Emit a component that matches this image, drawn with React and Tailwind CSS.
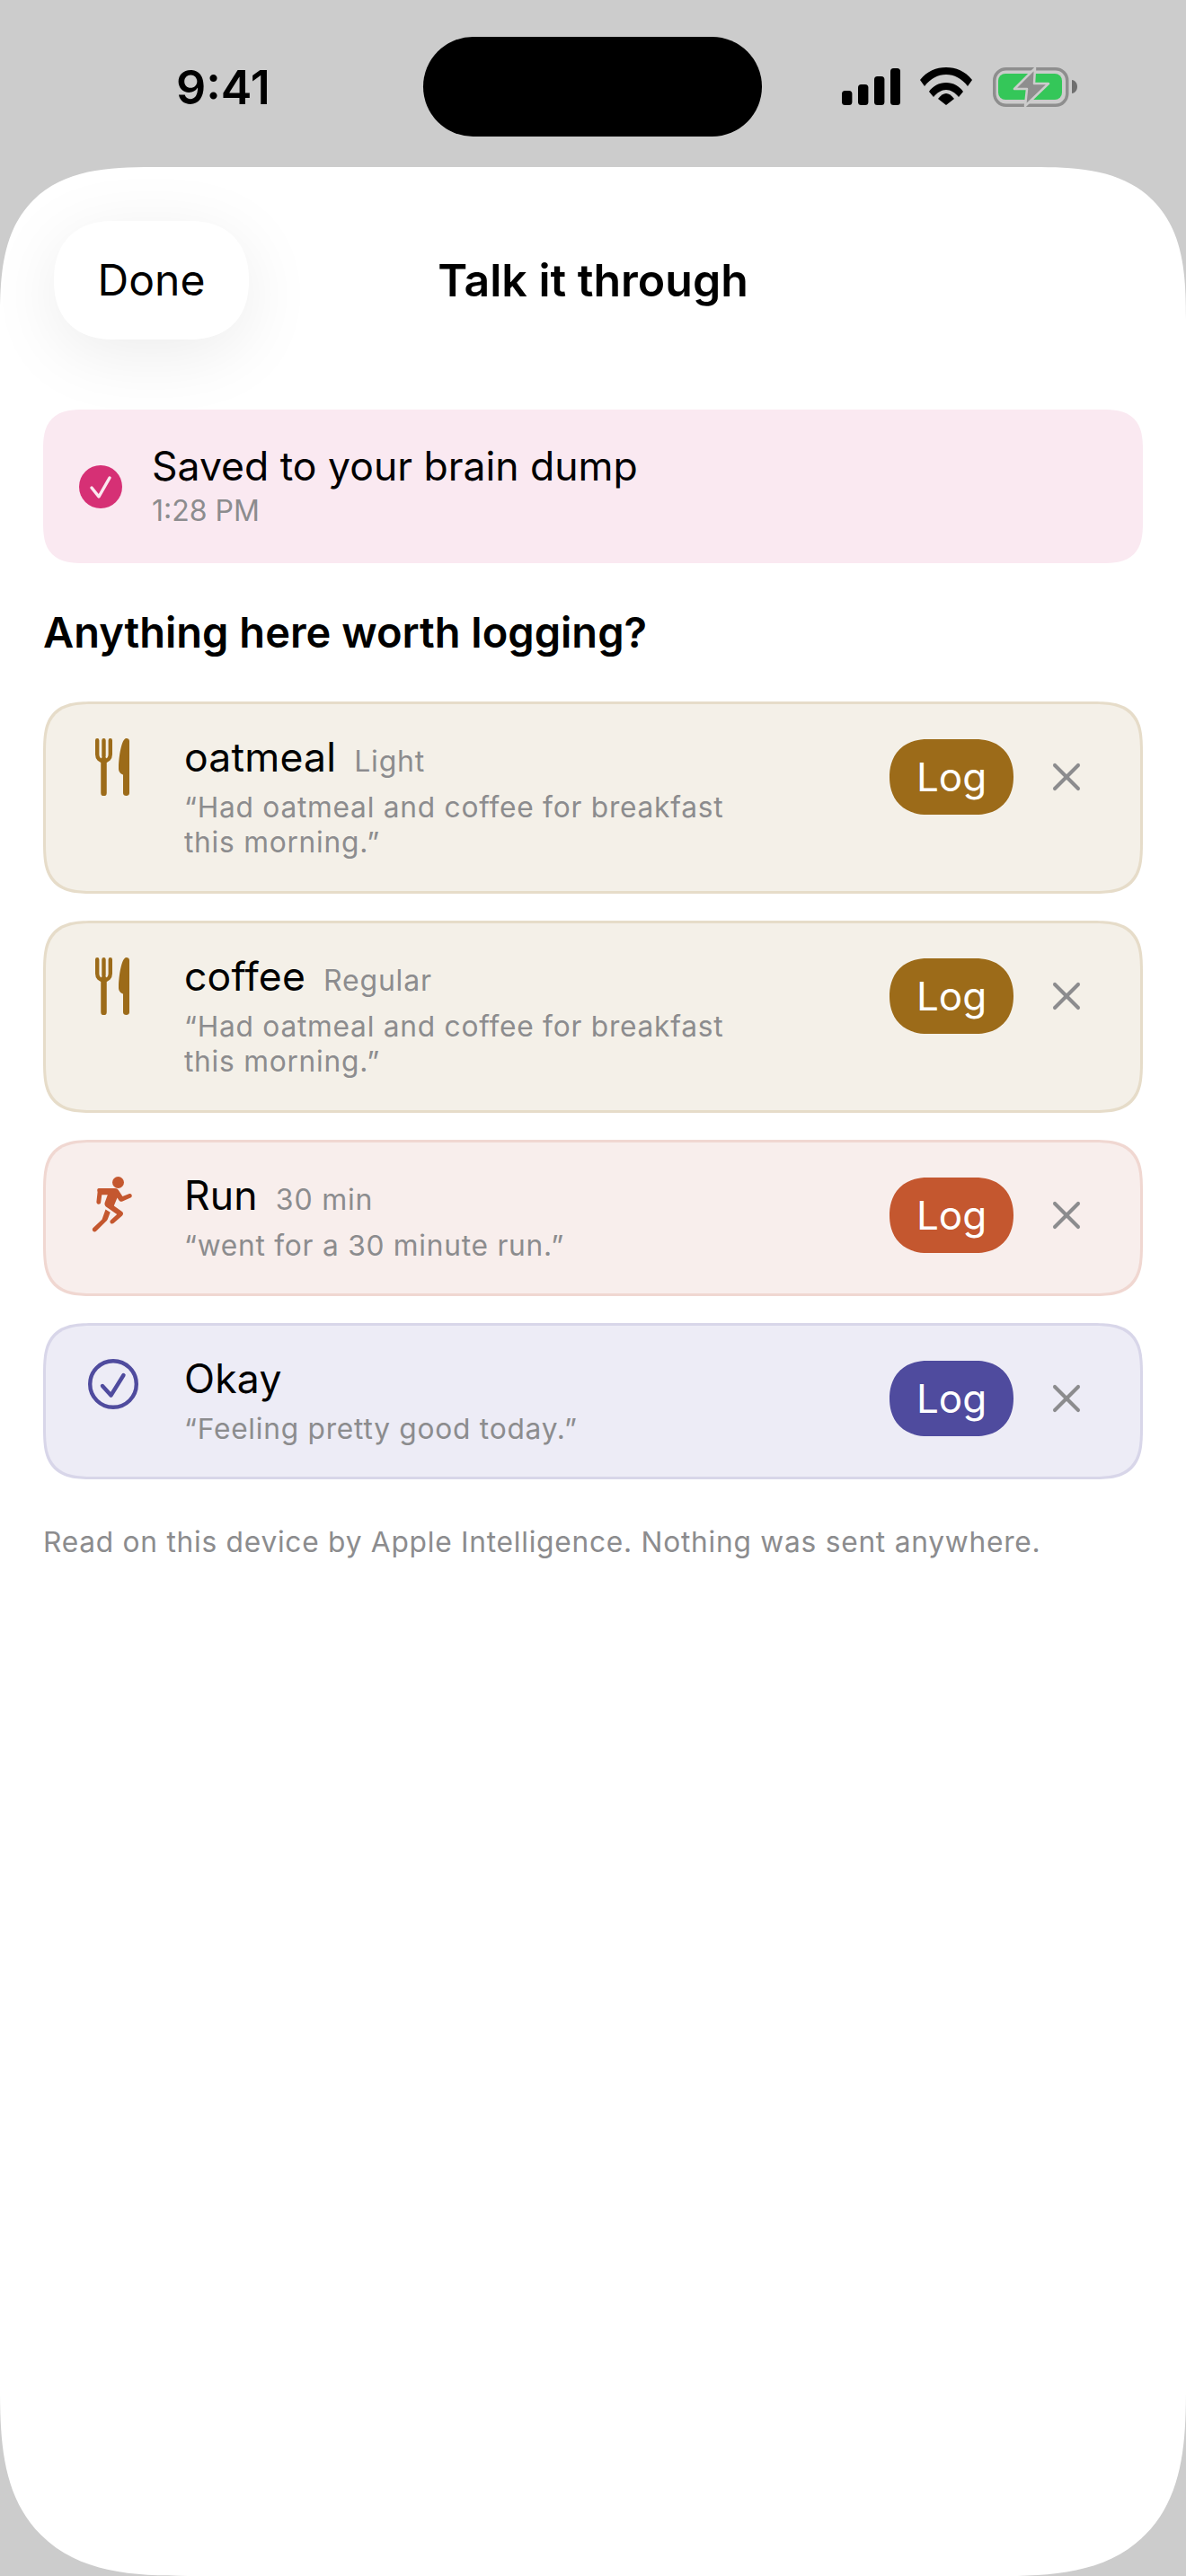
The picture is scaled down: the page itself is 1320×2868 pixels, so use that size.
import React from 'react'
import { X } from 'lucide-react'

const font = { fontFamily: 'Inter, "Liberation Sans", sans-serif' }

function ForkKnife({ className }) {
  return (
    <svg viewBox="0 0 38 64" className={className}>
      <path d="M2.200 2.200V18c0 4.200 3 7.200 7.300 7.200s7.300-3 7.300-7.200V2.200M9.500 2.200V20" fill="none" stroke="currentColor" strokeWidth="4.400" strokeLinecap="round" />
      <path d="M9.500 24V61" fill="none" stroke="currentColor" strokeWidth="6.500" strokeLinecap="round" />
      <path d="M34.500 0C36.600 0 38 1.200 38 3V61c0 1.800-1.500 3-3.500 3S31 62.800 31 61V40.500c-2-.5-5-3-5-6.500C26 20 29.500 0 34.500 0z" fill="currentColor" />
    </svg>
  )
}

function Runner({ className }) {
  return (
    <svg viewBox="0 0 48 62" className={className} fill="currentColor">
      <circle cx="29.500" cy="6.500" r="6.500" />
      <path d="M8 13h18c1.800 0 3 .7 3.800 2l4.600 7 7-2.800c1.400-.6 2.700 0 3.200 1.200.5 1.300 0 2.400-1.300 3l-9 4c-1.500.7-2.900.2-3.800-1l-2-2.800-3.700 8.800 8.800 6.300c1.800 1.300 1.900 3.300.4 4.800l-9.400 8.300c-1.200 1-2.700 1-3.600-.1-.9-1.100-.8-2.400.4-3.400l6.800-6.400-11.500-7.800c-2-1.400-2.800-3.400-1.900-5.600l3-8.300h-6.500l-1.100 8.300c-.2 1.500-1.200 2.300-2.600 2.200-1.500-.2-2.300-1.200-2.200-2.700l1.200-10.700C5.700 14.300 6.500 13 8 13z" />
      <path d="M15.500 36.500l5.200 3.200-2.800 7.500c-.3.800-.7 1.400-1.300 2L5 60.700c-1.100 1-2.500 1-3.500 0-1-1.100-.9-2.500.2-3.600l9.800-9.300z" />
    </svg>
  )
}

function CheckRing({ className }) {
  return (
    <svg viewBox="0 0 56 56" className={className} fill="none" stroke="currentColor">
      <circle cx="28" cy="28" r="25.800" strokeWidth="4.400" />
      <path d="M16 30l9.500 10.500L39.500 18" strokeWidth="4.400" strokeLinecap="round" strokeLinejoin="round" />
    </svg>
  )
}

function SignalIcon() {
  return (
    <svg width="65" height="41" viewBox="0 0 65 41" fill="black">
      <rect x="0" y="25" width="11.400" height="16" rx="3.500" />
      <rect x="18" y="18" width="11.400" height="23" rx="3.500" />
      <rect x="36" y="9" width="11.400" height="32" rx="3.500" />
      <rect x="54" y="0" width="11" height="41" rx="3.500" />
    </svg>
  )
}

function WifiIcon() {
  return (
    <svg width="58" height="42" viewBox="0 0 58 42" fill="black">
      <path d="M0 14C8 4 18 0 29 0s21 4 29 14l-5 7C46 12 38 8 29 8S12 12 5 21z" />
      <path d="M10 27c4-6 11-10 19-10s15 4 19 10l-5 6c-4-5-9-8-14-8s-10 3-14 8z" />
      <path d="M20 35c3-4 6-6 9-6s6 2 9 6l-9 7z" />
    </svg>
  )
}

function BatteryIcon() {
  return (
    <svg width="94" height="44" viewBox="0 0 94 44">
      <rect x="1.750" y="1.750" width="81" height="40.500" rx="13" fill="none" stroke="#8e8e8e" strokeWidth="3.500" />
      <rect x="6" y="7" width="71" height="29" rx="8" fill="#34c759" />
      <path d="M88 14c3.500 .5 6 3.500 6 7.500s-2.500 7-6 7.500z" fill="#6f6f6f" />
      <path d="M47 1L24 24h14l-2 19 26-25H46z" fill="#8e8e8e" stroke="#cccccc" strokeWidth="2.500" strokeLinejoin="round" />
    </svg>
  )
}

const cards = [
  { id: 'oatmeal', title: 'oatmeal', meta: 'Light', quote: ['“Had oatmeal and coffee for breakfast', 'this morning.”'], Icon: ForkKnife, box: 'bg-[#f4f0e8] border-[#e6dcc9]', tint: 'text-[#9c6b19]', pill: 'bg-[#9c6b19]', icon: 'w-[38px] h-[64px] ml-[9px] mt-[-1px]', tall: true },
  { id: 'coffee', title: 'coffee', meta: 'Regular', quote: ['“Had oatmeal and coffee for breakfast', 'this morning.”'], Icon: ForkKnife, box: 'bg-[#f4f0e8] border-[#e6dcc9]', tint: 'text-[#9c6b19]', pill: 'bg-[#9c6b19]', icon: 'w-[38px] h-[64px] ml-[9px] mt-[-1px]', tall: true },
  { id: 'run', title: 'Run', meta: '30 min', quote: ['“went for a 30 minute run.”'], Icon: Runner, box: 'bg-[#f8eeec] border-[#f0d7d1]', tint: 'text-[#c4572f]', pill: 'bg-[#c4572f]', icon: 'w-[48px] h-[62px] ml-[5px] mt-[-1px]' },
  { id: 'okay', title: 'Okay', meta: '', quote: ['“Feeling pretty good today.”'], Icon: CheckRing, box: 'bg-[#edecf6] border-[#d8d6e9]', tint: 'text-[#4f4b9e]', pill: 'bg-[#4f4b9e]', icon: 'w-[56px] h-[56px] mt-[-2px] ml-[1px]' },
]

function SuggestionCard({ card }) {
  const Icon = card.Icon
  return (
    <div className={`flex items-start border-[3px] rounded-[58px] [corner-shape:superellipse(1.6)] pl-[46px] pr-[56px] pt-[30px] ${card.tall ? 'h-[214px]' : 'h-[174px]'} ${card.box}`}>
      <div className={`w-[60px] mr-[48px] shrink-0 mt-[9px] ${card.tint}`}>
        <Icon className={`block ${card.icon}`} />
      </div>
      <div className="flex-1 min-w-0">
        <div className="flex items-baseline gap-[20px] h-[58px] mb-[7px]">
          <span className="text-[44.500px] leading-[58px] tracking-[0.2px] text-black">{card.title}</span>
          {card.meta && <span className="text-[32px] leading-[58px] tracking-[0.8px] text-[#8c8c8e]">{card.meta}</span>}
        </div>
        {card.quote.map((line) => (
          <div key={line} className="text-[31.700px] leading-[39px] tracking-[0.75px] text-[#8c8c8e] whitespace-nowrap">{line}</div>
        ))}
      </div>
      <div className="flex items-center shrink-0 mt-[9px]">
        <div className={`w-[138px] h-[84px] rounded-[42px] [corner-shape:superellipse(1.15)] flex items-center justify-center text-white text-[44px] ${card.pill}`}>Log</div>
        <X className="ml-[33px] text-[#8c8c8e]" size={52} strokeWidth={1.850} />
      </div>
    </div>
  )
}

export default function App() {
  return (
    <div style={font} className="w-[1320px] h-[2868px] bg-[#cccccc] flex flex-col overflow-hidden">
      <div className="h-[186px] shrink-0 flex items-start">
        <div className="w-[471px] shrink-0 pt-[64px] pl-[196px] text-[52px] leading-[68px] font-semibold text-black">9:41</div>
        <div className="w-[377px] h-[111px] mt-[41px] rounded-[56px] bg-black shrink-0" />
        <div className="flex items-start pl-[89px] pt-[75px]">
          <div className="mt-[1px]"><SignalIcon /></div>
          <div className="ml-[22px]"><WifiIcon /></div>
          <div className="ml-[23px]"><BatteryIcon /></div>
        </div>
      </div>
      <div className="flex-1 bg-white rounded-t-[170px] rounded-b-[210px] [corner-shape:superellipse(1.5)] px-[48px] flex flex-col">
        <div className="grid grid-cols-[1fr_auto_1fr] items-center h-[132px] mt-[60px] mb-[78px] shrink-0">
          <div className="justify-self-start ml-[12px] w-[217px] h-[132px] rounded-[66px] [corner-shape:superellipse(1.2)] bg-white shadow-[0_16px_80px_rgba(0,0,0,0.08)] flex items-center justify-center text-[48px] text-black">Done</div>
          <div className="text-[50px] leading-[74px] font-semibold text-black">Talk it through</div>
          <div />
        </div>
        <div className="h-[171px] rounded-[46px] [corner-shape:superellipse(1.5)] bg-[#fae9f1] flex items-center pl-[40px]">
          <div className="w-[48px] h-[48px] rounded-full bg-[#d63075] mr-[33px]">
            <svg width="48" height="48" viewBox="0 0 48 48" fill="none" stroke="#fbe8f0" strokeWidth="3.500" strokeLinecap="round" strokeLinejoin="round">
              <path d="M14 25l8 10 12-21" />
            </svg>
          </div>
          <div>
            <div className="text-[44.500px] leading-[54px] text-black">Saved to your brain dump</div>
            <div className="text-[32px] leading-[46px] text-[#8c8c8e]">1:28 PM</div>
          </div>
        </div>
        <div className="mt-[50px] mb-[50px] text-[47px] leading-[54px] font-semibold text-black">Anything here worth logging?</div>
        <div className="flex flex-col gap-[30px]">
          {cards.map((card) => <SuggestionCard key={card.id} card={card} />)}
        </div>
        <p className="mt-[50px] text-[31.700px] leading-[40px] tracking-[0.75px] text-[#8c8c8e]">Read on this device by Apple Intelligence. Nothing was sent anywhere.</p>
      </div>
    </div>
  )
}
